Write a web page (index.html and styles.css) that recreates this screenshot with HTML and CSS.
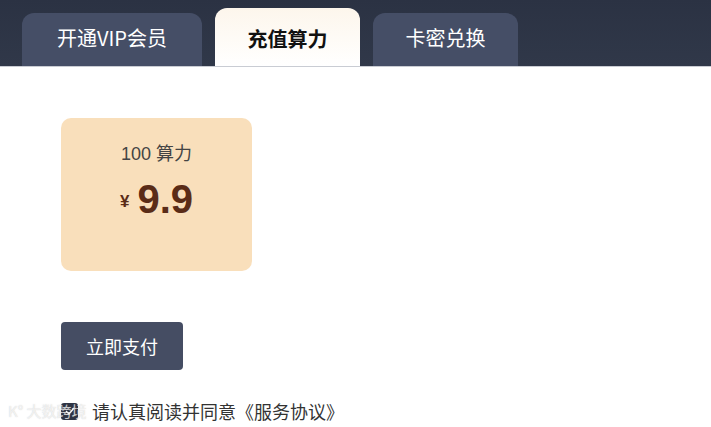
FILE: index.html
```html
<!DOCTYPE html>
<html lang="zh">
<head>
  <meta charset="UTF-8">
  <meta name="viewport" content="width=device-width, initial-scale=1.0">
  <title>充值算力</title>
  <link rel="stylesheet" href="styles.css">
</head>
<body>
  <div class="tabs">
    <div class="tab">开通VIP会员</div>
    <div class="tab active">充值算力</div>
    <div class="tab tab-small">卡密兑换</div>
  </div>

  <div class="content">
    <div class="card">
      <div class="card-title">100 算力</div>
      <div class="price"><span class="yen">¥</span>9.9</div>
    </div>

    <button class="pay-btn">立即支付</button>

    <label class="agree">
      <span class="check">
        <svg width="10" height="8" viewBox="0 0 10 8"><path d="M1 4l3 3 5-6" fill="none" stroke="#fff" stroke-width="1.4"/></svg>
      </span>
      请认真阅读并同意《服务协议》
    </label>
  </div>

  <div class="watermark">K° 大数跨境</div>
</body>
</html>
```

FILE: styles.css
```css
* {
  margin: 0;
  padding: 0;
  box-sizing: border-box;
}

body {
  font-family: "Noto Sans CJK SC", "Liberation Sans", sans-serif;
  background: #fff;
  width: 711px;
  height: 427px;
  overflow: hidden;
  position: relative;
}

.tabs {
  height: 67px;
  background: linear-gradient(to bottom, #2b3243, #303849);
  border-bottom: 1px solid #c9ccd3;
  display: flex;
  align-items: flex-end;
  gap: 13px;
  padding-left: 22px;
}

.tab {
  width: 180px;
  height: 53px;
  background: #454e66;
  border-radius: 12px 12px 0 0;
  color: #fff;
  font-size: 20px;
  display: flex;
  justify-content: center;
  align-items: center;
  padding-bottom: 5px;
}

.tab-small {
  width: 145px;
}

.tab.active {
  width: 145px;
  height: 58px;
  background: linear-gradient(to bottom, #fdf6ec, #ffffff);
  color: #111;
  font-weight: bold;
  font-size: 20px;
  padding-bottom: 0;
  padding-top: 3px;
}

.content {
  padding: 51px 0 0 61px;
}

.card {
  width: 191px;
  height: 153px;
  background: #f9dfbb;
  border-radius: 10px;
  text-align: center;
  padding-top: 24px;
}

.card-title {
  font-family: "Liberation Sans", "Noto Sans CJK SC", sans-serif;
  font-size: 18px;
  color: #444;
  line-height: 24px;
}

.price {
  font-family: "Liberation Sans", sans-serif;
  font-weight: bold;
  font-size: 40px;
  color: #5a2c17;
  margin-top: 10px;
  line-height: 46px;
}

.yen {
  font-size: 17px;
  margin-right: 8px;
  vertical-align: 6px;
  font-weight: bold;
}

.pay-btn {
  margin-top: 51px;
  width: 122px;
  height: 48px;
  background: #454d63;
  color: #fff;
  border: none;
  border-radius: 4px;
  font-family: "Noto Sans CJK SC", sans-serif;
  font-size: 18px;
  display: block;
}

.agree {
  margin-top: 28px;
  display: flex;
  align-items: center;
  gap: 14px;
  font-size: 18px;
  color: #333;
}

.check {
  width: 17px;
  height: 17px;
  background: #2e3444;
  border-radius: 3px;
  display: flex;
  justify-content: center;
  align-items: center;
}

.watermark {
  position: absolute;
  left: 8px;
  top: 400px;
  font-size: 15px;
  color: rgba(255, 255, 255, 0.7);
  text-shadow: 0 0 1px rgba(150, 150, 150, 0.5);
}
```
